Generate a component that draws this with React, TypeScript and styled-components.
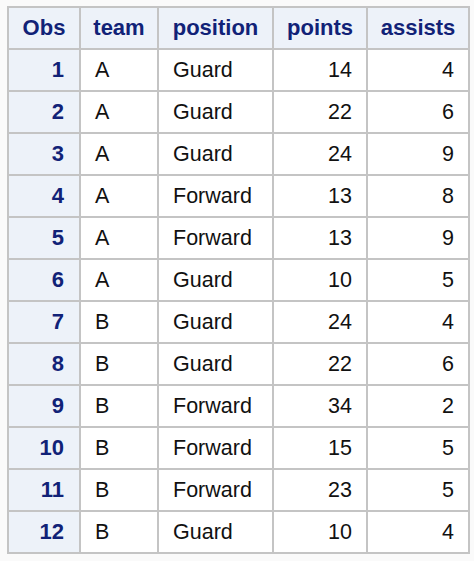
import { createGlobalStyle, styled } from 'styled-components'

type Row = {
  team: string
  position: string
  points: number
  assists: number
}

const rows: Row[] = [
  { team: 'A', position: 'Guard', points: 14, assists: 4 },
  { team: 'A', position: 'Guard', points: 22, assists: 6 },
  { team: 'A', position: 'Guard', points: 24, assists: 9 },
  { team: 'A', position: 'Forward', points: 13, assists: 8 },
  { team: 'A', position: 'Forward', points: 13, assists: 9 },
  { team: 'A', position: 'Guard', points: 10, assists: 5 },
  { team: 'B', position: 'Guard', points: 24, assists: 4 },
  { team: 'B', position: 'Guard', points: 22, assists: 6 },
  { team: 'B', position: 'Forward', points: 34, assists: 2 },
  { team: 'B', position: 'Forward', points: 15, assists: 5 },
  { team: 'B', position: 'Forward', points: 23, assists: 5 },
  { team: 'B', position: 'Guard', points: 10, assists: 4 },
]

const colWidths = [72, 78, 115, 94, 102]

export default function App() {
  return (
    <>
      <GlobalStyle />
      <Page>
        <Table>
          <colgroup>
            {colWidths.map((w, i) => (
              <col key={i} width={w} />
            ))}
          </colgroup>
          <thead>
            <tr>
              <Head>Obs</Head>
              <Head>team</Head>
              <Head>position</Head>
              <Head>points</Head>
              <Head>assists</Head>
            </tr>
          </thead>
          <tbody>
            {rows.map((r, i) => (
              <tr key={i}>
                <RowHead>{i + 1}</RowHead>
                <Cell>{r.team}</Cell>
                <Cell>{r.position}</Cell>
                <Cell $num>{r.points}</Cell>
                <Cell $num>{r.assists}</Cell>
              </tr>
            ))}
          </tbody>
        </Table>
      </Page>
    </>
  )
}

const GlobalStyle = createGlobalStyle`
  body {
    margin: 0;
    background: #fafafa;
    font-family: "Liberation Sans", Arial, sans-serif;
  }
`

const Page = styled.div`
  padding: 6px 0 0 7px;
`

const Table = styled.table`
  border-collapse: collapse;
  table-layout: fixed;
  width: 461px;
  font-size: 21.5px;
  background: #ffffff;
  border: 2px solid #c4c4c4;

  tr {
    height: 42px;
  }
`

const Head = styled.th`
  background: #edf2f9;
  color: #112277;
  font-size: 22px;
  font-weight: bold;
  text-align: center;
  border: 2px solid #c4c4c4;
  padding: 0;
`

const RowHead = styled.th`
  background: #edf2f9;
  color: #112277;
  font-size: 22px;
  font-weight: bold;
  text-align: right;
  border: 2px solid #c4c4c4;
  padding: 0 15px 0 0;
`

const Cell = styled.td<{ $num?: boolean }>`
  color: #111111;
  text-align: ${p => (p.$num ? 'right' : 'left')};
  border: 2px solid #c4c4c4;
  padding: ${p => (p.$num ? '0 14px 0 0' : '0 0 0 14px')};
`
